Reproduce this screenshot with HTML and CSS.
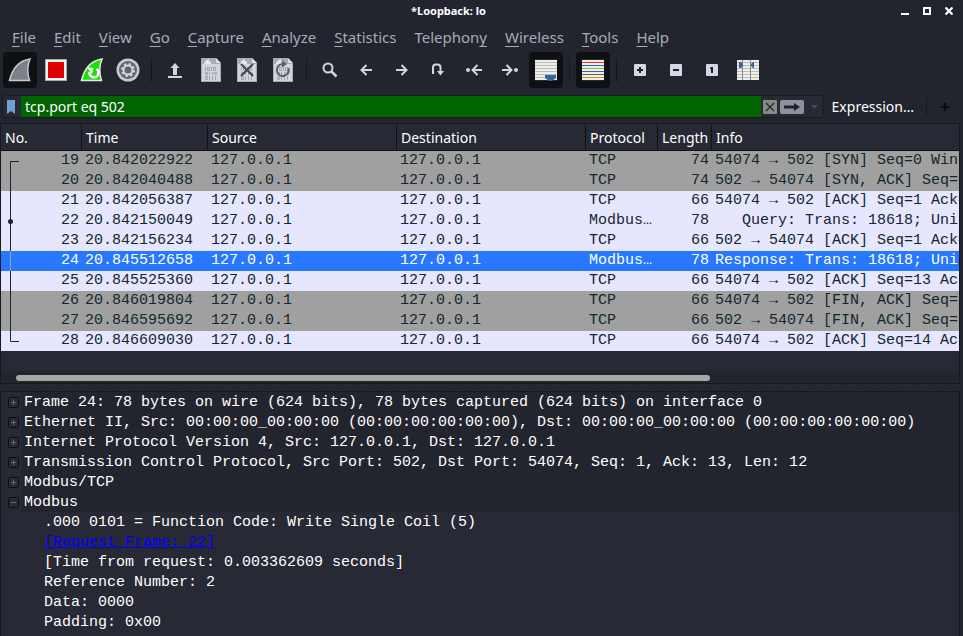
FILE: index.html
```
<!DOCTYPE html>
<html lang="en">
<head>
<meta charset="utf-8">
<title>*Loopback: lo</title>
<link rel="stylesheet" href="styles.css">
</head>
<body>
<svg class="defs" aria-hidden="true">
  <defs>
    <g id="doc">
      <path d="M1 0h15l5 5v19H1z" fill="#a9abb3"/>
      <path d="M2 6h18v17H2z" fill="#d3d5db"/>
      <path d="M4 6q1-4 5-5v3l2-1v3z" fill="#e6e7eb"/>
      <path d="M16 0v5h5z" fill="#dcdee3"/>
      <g fill="none" stroke="#a2a4ac" stroke-width="1">
        <path d="M5.500 9v4M7.500 9.500h2v3h-2zM11.500 9v4M13.500 9.500h2v3h-2zM5.500 14.500h2v2h-2zM9.500 14v3M12.500 14v3M14.500 14.500h2v2h-2zM5.500 18.500h2v3h-2zM9.500 18v4M12.500 18v4M15.500 18v4"/>
      </g>
    </g>
    <path id="fin" d="M1.500 22.500C4 12 9 3 22 1c-3 7-3 14-.5 21.500z"/>
  </defs>
</svg>
<header class="titlebar">
  <h1>*Loopback: lo</h1>
  <div class="window-controls">
    <button aria-label="Minimize"><svg width="8" height="8"><path d="M0 6h8v2H0z" fill="#fff"/></svg></button>
    <button aria-label="Maximize"><svg width="8" height="8"><path d="M1 1h6v6H1z" fill="none" stroke="#fff" stroke-width="2"/></svg></button>
    <button aria-label="Close"><svg width="8" height="8"><path d="M.5.5l7 7M7.500.5l-7 7" stroke="#fff" stroke-width="2.200"/></svg></button>
  </div>
</header>
<nav class="menu">
  <button><u>F</u>ile</button><button><u>E</u>dit</button><button><u>V</u>iew</button><button><u>G</u>o</button><button><u>C</u>apture</button><button><u>A</u>nalyze</button><button><u>S</u>tatistics</button><button>Telephon<u>y</u></button><button><u>W</u>ireless</button><button><u>T</u>ools</button><button><u>H</u>elp</button>
</nav>
<div class="toolbar">
  <button class="on" aria-label="Start capture"><svg width="24" height="24"><use href="#fin" fill="#7e8089" stroke="#c6c8ce" stroke-width="1.500"/></svg></button>
  <button aria-label="Stop capture"><svg width="24" height="24"><path d="M1 1h22v22H1z" fill="#a9a9a9"/><path d="M2 2h20v20H2z" fill="#f4f4f2"/><path d="M4 4h16v16H4z" fill="#d00"/></svg></button>
  <button aria-label="Restart capture"><svg width="24" height="24"><use href="#fin" fill="#1fdf0a" stroke="#e4e9e4" stroke-width="1.500"/><path d="M16.500 11a4.500 4.500 0 1 1-7 3" fill="none" stroke="#fff" stroke-width="2.500"/><path d="M7 9.500l6.500.5-1.500 6z" fill="#fff"/></svg></button>
  <button aria-label="Capture options"><svg width="24" height="24"><circle cx="12" cy="12" r="11.500" fill="#c7c9d0"/><circle cx="12" cy="12" r="9" fill="#62656e"/><circle cx="12" cy="12" r="6" fill="none" stroke="#d5d7dd" stroke-width="2" stroke-dasharray="2.350 2.350"/><circle cx="12" cy="12" r="4.500" fill="none" stroke="#d5d7dd" stroke-width="2"/></svg></button>
  <hr>
  <button aria-label="Open file"><svg width="24" height="24"><path d="M12 5l4.500 5H14v7h-4v-7H7.500zM5 18h14v2H5z" fill="#d3d5de"/></svg></button>
  <button aria-label="Save file"><svg width="22" height="24"><use href="#doc"/></svg></button>
  <button aria-label="Close file"><svg width="22" height="24"><use href="#doc"/><path d="M5 6l12 12M17 6L5 18" stroke="#44464d" stroke-width="2"/></svg></button>
  <button aria-label="Reload file"><svg width="22" height="24"><use href="#doc"/><path d="M16.500 10a6 6 0 1 1-6-4" fill="none" stroke="#5d5f67" stroke-width="2"/><path d="M10 2.500l5 3.500-5 3.500z" fill="#5d5f67"/></svg></button>
  <hr>
  <button aria-label="Find packet"><svg width="24" height="24"><circle cx="10" cy="10" r="4.500" fill="none" stroke="#d3d5de" stroke-width="2"/><path d="M13 13l5.500 5.500" stroke="#d3d5de" stroke-width="2.500"/></svg></button>
  <button aria-label="Previous packet"><svg width="24" height="24"><path d="M18 12H8M12.500 7l-5 5 5 5" class="stroke"/></svg></button>
  <button aria-label="Next packet"><svg width="24" height="24"><path d="M6 12h10M11.500 7l5 5-5 5" class="stroke"/></svg></button>
  <button aria-label="Go to packet"><svg width="24" height="24"><path d="M7 16v-6.500a3 3 0 0 1 3-3h1.500a3 3 0 0 1 3 3V16" class="stroke"/><path d="M11 13h7l-3.500 4.500z" fill="#d3d5de"/></svg></button>
  <button aria-label="First packet"><svg width="24" height="24"><path d="M20 12h-9M15.500 7l-5 5 5 5" class="stroke"/><circle cx="6" cy="12" r="2" fill="#d3d5de"/></svg></button>
  <button aria-label="Last packet"><svg width="24" height="24"><path d="M4 12h9M8.500 7l5 5-5 5" class="stroke"/><circle cx="18" cy="12" r="2" fill="#d3d5de"/></svg></button>
  <button class="on" aria-label="Auto scroll"><svg width="24" height="24"><path d="M1 1h22v22H1z" fill="#eeeeec"/><path d="M1 1.500h22M1 22.500h22" stroke="#27292b"/><path d="M1 4.500h22M1 7.500h22M1 10.500h22M1 13.500h22M1 16.500h22M1 19.500h22" stroke="#babdb6"/><path d="M11 17h11v3l-4 3h-3l-4-3z" fill="#3465a4"/></svg></button>
  <hr>
  <button class="on" aria-label="Colorize packets"><svg width="24" height="24"><path d="M1 1h22v22H1z" fill="#eeeeec"/><path d="M1 1.500h22M1 22.500h22" stroke="#27292b"/><path d="M1 4.500h22" stroke="#ef2929"/><path d="M1 7.500h22M1 13.500h22" stroke="#3465a4"/><path d="M1 10.500h22" stroke="#73d216"/><path d="M1 16.500h22" stroke="#75507b"/><path d="M1 19.500h22" stroke="#c4a000"/></svg></button>
  <hr>
  <button aria-label="Zoom in"><svg width="24" height="24"><rect x="6" y="6" width="12" height="12" rx="1" fill="#d3d9e4"/><path d="M9 12h6M12 9v6" stroke="#20222b" stroke-width="2"/></svg></button>
  <button aria-label="Zoom out"><svg width="24" height="24"><rect x="6" y="6" width="12" height="12" rx="1" fill="#d3d9e4"/><path d="M9 12h6" stroke="#20222b" stroke-width="2"/></svg></button>
  <button aria-label="Normal size"><svg width="24" height="24"><rect x="6" y="6" width="12" height="12" rx="1" fill="#d3d9e4"/><path d="M11 9h2v6h-2v-4h-1v-1z" fill="#20222b"/></svg></button>
  <button aria-label="Resize columns"><svg width="24" height="24"><path d="M1 1h22v22H1z" fill="#eeeeec"/><path d="M1 1.500h22M1 22.500h22" stroke="#27292b"/><path d="M1 4.500h22M1 7.500h22M1 10.500h22M1 13.500h22M1 16.500h22M1 19.500h22" stroke="#babdb6"/><path d="M6.500 2v20M14.500 2v20" stroke="#888a85"/><path d="M3 4h2l2 2v2l-2 2H3zM18 4h-1l-2 2v2l2 2h1z" fill="#3465a4"/></svg></button>
</div>
<div class="filter">
  <div class="filter-box">
    <button class="mark" aria-label="Bookmarks"><svg width="8" height="14"><path d="M0 0h8v14l-4-3-4 3z" fill="#729fcf"/></svg></button>
    <input type="text" aria-label="Display filter" value="tcp.port eq 502" spellcheck="false">
    <button aria-label="Clear"><svg width="14" height="14"><rect width="14" height="14" rx="1" fill="#888a85"/><path d="M3 3l8 8M11 3l-8 8" stroke="#25272d" stroke-width="1.300"/></svg></button>
    <button aria-label="Apply"><svg width="24" height="14"><rect width="24" height="14" rx="2" fill="#8f919e"/><path d="M4 5.500h10V3l6 4-6 4V8.500H4z" fill="#20222b"/></svg></button>
    <button class="drop" aria-label="Recent filters"><svg width="8" height="4"><path d="M0 0h7L3.500 4z" fill="#484a52"/></svg></button>
  </div>
  <button class="expression">Expression…</button>
  <hr>
  <button class="add" aria-label="Add filter button"><svg width="8" height="8"><path d="M0 4h8M4 0v8" stroke="#090a0d" stroke-width="2"/></svg></button>
</div>
<main>
<section class="packets">
<table>
  <colgroup><col class="c-no"><col class="c-time"><col class="c-addr"><col class="c-addr"><col class="c-proto"><col class="c-len"><col></colgroup>
  <thead><tr><th>No.</th><th>Time</th><th>Source</th><th>Destination</th><th>Protocol</th><th>Length</th><th>Info</th></tr></thead>
  <tbody>
  <tr class="gray"><td><div class="no"><svg width="20" height="20"><path d="M18 10.500H9.500V20"/></svg>19</div></td><td>20.842022922</td><td>127.0.0.1</td><td>127.0.0.1</td><td>TCP</td><td>74</td><td>54074 → 502 [SYN] Seq=0 Win=</td></tr>
  <tr class="gray"><td><div class="no"><svg width="20" height="20"><path d="M9.500 0v20"/></svg>20</div></td><td>20.842040488</td><td>127.0.0.1</td><td>127.0.0.1</td><td>TCP</td><td>74</td><td>502 → 54074 [SYN, ACK] Seq=0</td></tr>
  <tr><td><div class="no"><svg width="20" height="20"><path d="M9.500 0v20"/></svg>21</div></td><td>20.842056387</td><td>127.0.0.1</td><td>127.0.0.1</td><td>TCP</td><td>66</td><td>54074 → 502 [ACK] Seq=1 Ack=</td></tr>
  <tr><td><div class="no"><svg width="20" height="20"><path d="M9.500 0v20"/><circle cx="9.500" cy="10.500" r="2.500"/></svg>22</div></td><td>20.842150049</td><td>127.0.0.1</td><td>127.0.0.1</td><td>Modbus/TCP</td><td>78</td><td>   Query: Trans: 18618; Unit</td></tr>
  <tr><td><div class="no"><svg width="20" height="20"><path d="M9.500 0v20"/></svg>23</div></td><td>20.842156234</td><td>127.0.0.1</td><td>127.0.0.1</td><td>TCP</td><td>66</td><td>502 → 54074 [ACK] Seq=1 Ack=</td></tr>
  <tr class="selected"><td><div class="no"><svg width="20" height="20"><path d="M9.500 0v20"/></svg>24</div></td><td>20.845512658</td><td>127.0.0.1</td><td>127.0.0.1</td><td>Modbus/TCP</td><td>78</td><td>Response: Trans: 18618; Unit</td></tr>
  <tr><td><div class="no"><svg width="20" height="20"><path d="M9.500 0v20"/></svg>25</div></td><td>20.845525360</td><td>127.0.0.1</td><td>127.0.0.1</td><td>TCP</td><td>66</td><td>54074 → 502 [ACK] Seq=13 Ack</td></tr>
  <tr class="gray"><td><div class="no"><svg width="20" height="20"><path d="M9.500 0v20"/></svg>26</div></td><td>20.846019804</td><td>127.0.0.1</td><td>127.0.0.1</td><td>TCP</td><td>66</td><td>54074 → 502 [FIN, ACK] Seq=1</td></tr>
  <tr class="gray"><td><div class="no"><svg width="20" height="20"><path d="M9.500 0v20"/></svg>27</div></td><td>20.846595692</td><td>127.0.0.1</td><td>127.0.0.1</td><td>TCP</td><td>66</td><td>502 → 54074 [FIN, ACK] Seq=1</td></tr>
  <tr><td><div class="no"><svg width="20" height="20"><path d="M9.500 0v10.500H18"/></svg>28</div></td><td>20.846609030</td><td>127.0.0.1</td><td>127.0.0.1</td><td>TCP</td><td>66</td><td>54074 → 502 [ACK] Seq=14 Ack</td></tr>
  </tbody>
</table>
<div class="track"><div class="thumb"></div></div>
</section>
<div class="splitter"></div>
<section class="details">
  <ul>
    <li><button aria-label="Expand"><svg width="11" height="11"><rect x=".5" y=".5" width="10" height="10" rx="1"/><path d="M3 5.500h5M5.500 3v5"/></svg></button><span>Frame 24: 78 bytes on wire (624 bits), 78 bytes captured (624 bits) on interface 0</span></li>
    <li><button aria-label="Expand"><svg width="11" height="11"><rect x=".5" y=".5" width="10" height="10" rx="1"/><path d="M3 5.500h5M5.500 3v5"/></svg></button><span>Ethernet II, Src: 00:00:00_00:00:00 (00:00:00:00:00:00), Dst: 00:00:00_00:00:00 (00:00:00:00:00:00)</span></li>
    <li><button aria-label="Expand"><svg width="11" height="11"><rect x=".5" y=".5" width="10" height="10" rx="1"/><path d="M3 5.500h5M5.500 3v5"/></svg></button><span>Internet Protocol Version 4, Src: 127.0.0.1, Dst: 127.0.0.1</span></li>
    <li><button aria-label="Expand"><svg width="11" height="11"><rect x=".5" y=".5" width="10" height="10" rx="1"/><path d="M3 5.500h5M5.500 3v5"/></svg></button><span>Transmission Control Protocol, Src Port: 502, Dst Port: 54074, Seq: 1, Ack: 13, Len: 12</span></li>
    <li><button aria-label="Expand"><svg width="11" height="11"><rect x=".5" y=".5" width="10" height="10" rx="1"/><path d="M3 5.500h5M5.500 3v5"/></svg></button><span>Modbus/TCP</span></li>
    <li><button aria-label="Collapse"><svg width="11" height="11"><rect x=".5" y=".5" width="10" height="10" rx="1"/><path d="M3 5.500h5"/></svg></button><span>Modbus</span></li>
  </ul>
  <ul class="fields">
    <li>.000 0101 = Function Code: Write Single Coil (5)</li>
    <li><a href="#frame22">[Request Frame: 22]</a></li>
    <li>[Time from request: 0.003362609 seconds]</li>
    <li>Reference Number: 2</li>
    <li>Data: 0000</li>
    <li>Padding: 0x00</li>
  </ul>
</section>
</main>
</body>
</html>
```
FILE: styles.css
```
* { box-sizing: border-box; }
body {
  margin: 0;
  height: 100vh;
  overflow: hidden;
  display: flex;
  flex-direction: column;
  background: #23252e;
  color: #fff;
  font: 14px/20px "Noto Sans", sans-serif;
}
button {
  padding: 0;
  border: 0;
  background: none;
  color: inherit;
  font: inherit;
  display: flex;
  align-items: center;
  justify-content: center;
}
svg { display: block; flex: none; }
.defs { position: absolute; width: 0; height: 0; }
.stroke { fill: none; stroke: #d3d5de; stroke-width: 2; }
hr { margin: 0; border: 0; width: 1px; background: #15161c; flex: none; }

.titlebar {
  display: grid;
  grid-template-columns: 1fr auto 1fr;
  align-items: center;
  height: 22px;
  padding: 0 10px 0 0;
  flex: none;
}
.titlebar h1 { grid-column: 2; margin: 0 0 0 -56px; font-size: 11px; font-weight: 700; }
.window-controls { display: flex; gap: 14px; justify-content: flex-end; }

.menu { display: flex; height: 30px; padding: 0 3px; flex: none; color: #a7abb7; font-size: 15px; }
.menu button { display: block; padding: 0 9px; }
.menu u { text-underline-offset: 3px; text-decoration-thickness: 1px; }

.toolbar { display: flex; gap: 2px; height: 36px; padding: 0 3px; flex: none; }
.toolbar button { width: 34px; height: 36px; border-radius: 4px; }
.toolbar .on { background: #0f1013; }
.toolbar hr { height: 24px; margin: 6px 4px; }

.filter { display: flex; align-items: center; height: 23px; margin: 7px 14px 5px 2px; flex: none; }
.filter-box {
  flex: 1;
  min-width: 0;
  display: flex;
  align-items: center;
  gap: 3px;
  height: 23px;
  border: 1px solid #1a1b22;
  border-radius: 3px;
  background: #272934;
}
.mark { width: 15px; }
.filter-box input {
  flex: 1;
  min-width: 0;
  height: 21px;
  margin: 0 -1px 0 0;
  padding: 0 4px;
  border: 0;
  outline: 0;
  background: #006400;
  color: #fff;
  font: inherit;
}
.drop { width: 15px; margin-left: 1px; }
.expression { margin: 0 12px 0 8px; }
.filter hr { height: 17px; }
.add { margin-left: 14px; }

main { flex: 1; min-height: 0; display: flex; flex-direction: column; padding-right: 3px; }
.packets { border: 1px solid #17181e; flex: none; background: #272934; }
table {
  width: 100%;
  table-layout: fixed;
  border-collapse: separate;
  border-spacing: 0;
  margin-bottom: 20px;
}
.c-no { width: 81px; }
.c-time { width: 126px; }
.c-addr { width: 189px; }
.c-proto { width: 72px; }
.c-len { width: 54px; }
th {
  height: 27px;
  padding: 2px 0 0 4px;
  border-right: 1px solid #111217;
  border-bottom: 1px solid #111217;
  background: #272934;
  text-align: left;
  font-weight: 400;
}
th:last-child { border-right: 0; }
td {
  height: 20px;
  padding: 0 3px;
  overflow: hidden;
  white-space: pre;
  text-overflow: ellipsis;
  font: 15px/20px "Liberation Mono", monospace;
  vertical-align: top;
}
td:last-child { text-overflow: clip; padding-right: 0; }
td:nth-child(6) { text-align: right; }
td:first-child { padding-left: 0; }
tbody tr { background: #e7e6ff; color: #12272e; }
tbody .gray { background: #a0a0a0; }
tbody .selected { background: #2777ff; color: #fff; }
.no { display: flex; justify-content: space-between; height: 20px; }
.no path { fill: none; stroke: #12272e; }
.no circle { fill: #12272e; }
.selected .no path { stroke: #a0a0a0; }
.track { height: 12px; padding: 4px 0 0 15px; background: #23252e; }
.thumb { width: 73.6%; height: 6px; border-radius: 3px; background: #a6a6a6; }
.splitter {
  height: 7px;
  flex: none;
  background: repeating-linear-gradient(45deg, #23252e 0 2px, #292b35 2px 3px);
}
.details {
  flex: 1;
  min-height: 0;
  overflow: hidden;
  border: 1px solid #17181e;
  border-bottom: 0;
  background: #272934;
  font: 15px/22px "Liberation Mono", monospace;
}
ul { list-style: none; margin: 0; padding: 0; }
.details li { display: flex; height: 20px; white-space: pre; }
.details li span { flex: 1; padding-left: 3px; background: #23252e; }
.details button { width: 13px; height: 20px; margin-left: 7px; align-items: flex-end; justify-content: flex-start; padding-bottom: 4px; }
.details rect { fill: none; stroke: #0b0c10; }
.details path { stroke: #666872; }
.fields { padding-left: 43px; }
.fields a { color: #00f; }
```
